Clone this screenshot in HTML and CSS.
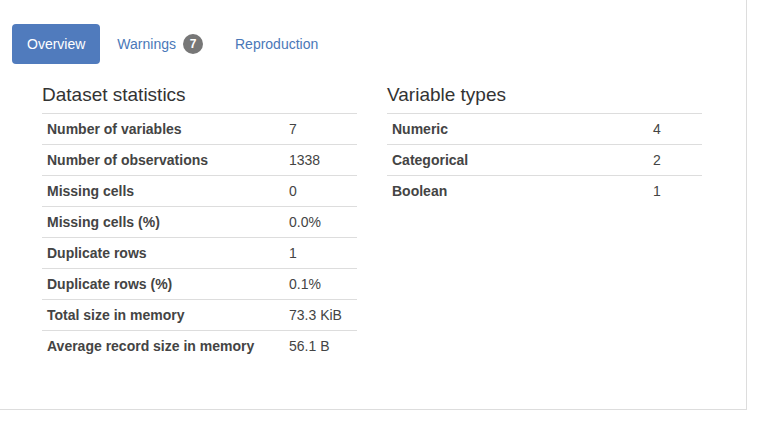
FILE: index.html
```html
<!DOCTYPE html>
<html>
<head>
<meta charset="utf-8">
<link rel="stylesheet" href="styles.css">
</head>
<body>
<div class="panel">
  <ul class="pills">
    <li class="pill active">Overview</li>
    <li class="pill">Warnings <span class="badge">7</span></li>
    <li class="pill">Reproduction</li>
  </ul>
  <div class="row">
    <div class="col">
      <h4>Dataset statistics</h4>
      <table class="stats left">
        <tr><th>Number of variables</th><td>7</td></tr>
        <tr><th>Number of observations</th><td>1338</td></tr>
        <tr><th>Missing cells</th><td>0</td></tr>
        <tr><th>Missing cells (%)</th><td>0.0%</td></tr>
        <tr><th>Duplicate rows</th><td>1</td></tr>
        <tr><th>Duplicate rows (%)</th><td>0.1%</td></tr>
        <tr><th>Total size in memory</th><td>73.3 KiB</td></tr>
        <tr><th>Average record size in memory</th><td>56.1 B</td></tr>
      </table>
    </div>
    <div class="col">
      <h4>Variable types</h4>
      <table class="stats right">
        <tr><th>Numeric</th><td>4</td></tr>
        <tr><th>Categorical</th><td>2</td></tr>
        <tr><th>Boolean</th><td>1</td></tr>
      </table>
    </div>
  </div>
</div>
</body>
</html>
```
FILE: styles.css
```css
html, body {
  margin: 0;
  padding: 0;
  background: #fff;
  font-family: "Liberation Sans", Arial, sans-serif;
  color: #333;
}
.panel {
  box-sizing: border-box;
  width: 747px;
  height: 410px;
  border-right: 1px solid #ddd;
  border-bottom: 1px solid #ddd;
  padding: 24px 0 0 12px;
}
.pills {
  list-style: none;
  margin: 0;
  padding: 0;
  display: flex;
  gap: 2px;
}
.pill {
  padding: 10px 15px;
  font-size: 14px;
  line-height: 20px;
  color: #4a78b8;
  border-radius: 4px;
  display: flex;
  align-items: center;
}
.pill.active {
  background: #507bbd;
  color: #fff;
}
.badge {
  display: inline-block;
  width: 20px;
  height: 20px;
  border-radius: 10px;
  background: #777;
  color: #fff;
  font-size: 12px;
  font-weight: bold;
  line-height: 20px;
  text-align: center;
  margin-left: 7px;
}
.row {
  display: flex;
  padding-left: 15px;
}
.col {
  width: 345px;
  padding: 0 15px;
  box-sizing: border-box;
}
h4 {
  margin: 21px 0 8px;
  font-size: 19px;
  line-height: 20px;
  font-weight: normal;
  color: #333;
}
.stats {
  width: 315px;
  border-collapse: collapse;
  font-size: 14px;
}
.stats th, .stats td {
  border-top: 1px solid #ddd;
  padding: 5px;
  line-height: 20px;
  text-align: left;
  vertical-align: top;
}
.stats th {
  font-weight: bold;
  color: #444;
}
.stats td {
  color: #444;
}
.left th { width: 232px; }
.right th { width: 251px; }
```
